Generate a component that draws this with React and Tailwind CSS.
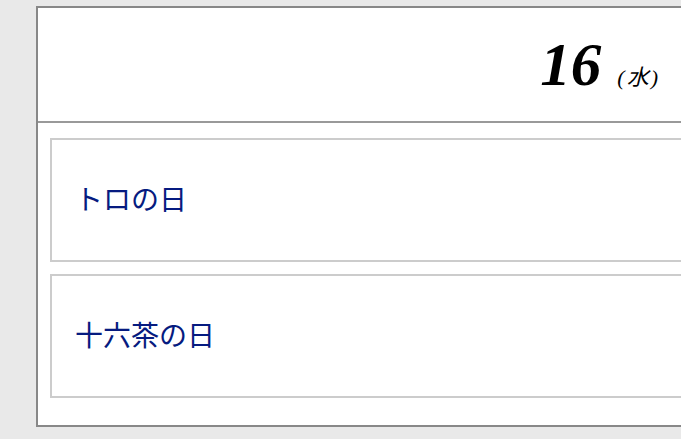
import React from "react";

const events = ["トロの日", "十六茶の日"];

const App = () => {
  return (
    <div className="w-[681px] h-[439px] overflow-hidden bg-[#e9e9e9] pt-[6px] pl-[36px]">
      <div className="w-[680px] border-2 border-[#888888] bg-white">
        <div className="h-[115px] flex items-center justify-end pr-[54px] border-b-2 border-[#999999]">
          <div className="flex items-baseline gap-[16px] font-['Liberation_Serif','Noto_Sans_CJK_JP',serif] text-black">
            <span className="text-[61px] font-bold italic leading-none">16</span>
            <span className="text-[22px] italic leading-none tracking-[2px]">(水)</span>
          </div>
        </div>
        <div className="pt-[15px] pl-[12px] pb-[15px]">
          {events.map((name) => (
            <div
              key={name}
              className="h-[124px] mb-[12px] border-2 border-[#cccccc] flex items-center pl-[23px] pb-[4px]"
            >
              <span className="text-[28px] text-[#061b80] font-['Noto_Sans_CJK_JP',sans-serif] leading-none">
                {name}
              </span>
            </div>
          ))}
        </div>
      </div>
    </div>
  );
};

export default App;
